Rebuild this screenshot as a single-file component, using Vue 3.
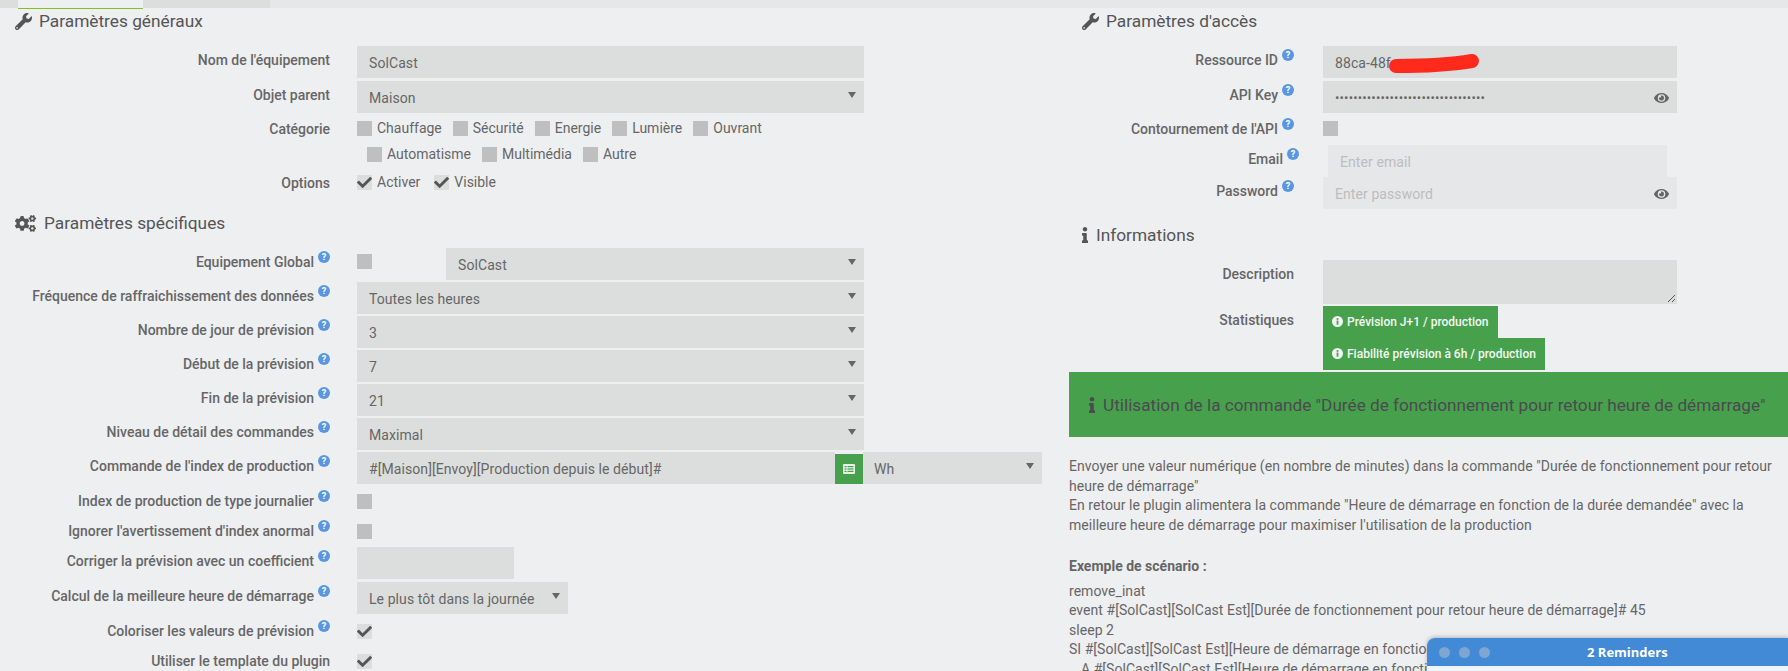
<script setup>
const wrench = 'M507.73 109.1c-2.24-9.03-13.54-12.09-20.12-5.51l-74.36 74.36-67.88-11.31-11.31-67.88 74.36-74.36c6.62-6.62 3.43-17.9-5.66-20.16-47.38-11.74-99.55.91-136.58 37.93-39.64 39.64-50.55 97.1-34.05 147.2L18.74 402.76c-24.99 24.99-24.99 65.51 0 90.5 24.99 24.99 65.51 24.99 90.5 0l213.21-213.21c50.12 16.71 107.47 5.68 147.37-34.22 37.07-37.07 49.7-89.32 37.91-136.73zM64 472c-13.25 0-24-10.75-24-24 0-13.26 10.75-24 24-24s24 10.74 24 24c0 13.25-10.75 24-24 24z'
const cogs = 'M512.1 191l-8.2 14.3c-3 5.3-9.4 7.5-15.1 5.4-11.8-4.4-22.6-10.7-32.1-18.6-4.6-3.8-5.8-10.5-2.8-15.7l8.2-14.3c-6.9-8-12.3-17.3-15.9-27.4h-16.5c-6 0-11.2-4.3-12.2-10.3-2-12-2.1-24.6 0-37.1 1-6 6.2-10.4 12.2-10.4h16.5c3.6-10.1 9-19.4 15.9-27.4l-8.2-14.3c-3-5.2-1.9-11.9 2.8-15.7 9.5-7.9 20.4-14.2 32.1-18.6 5.7-2.1 12.1.1 15.1 5.4l8.2 14.3c10.5-1.9 21.2-1.9 31.7 0L552 6.3c3-5.3 9.4-7.5 15.1-5.4 11.8 4.4 22.6 10.7 32.1 18.6 4.6 3.8 5.8 10.5 2.8 15.7l-8.2 14.3c6.9 8 12.3 17.3 15.9 27.4h16.5c6 0 11.2 4.3 12.2 10.3 2 12 2.1 24.6 0 37.1-1 6-6.2 10.4-12.2 10.4h-16.5c-3.6 10.1-9 19.4-15.9 27.4l8.2 14.3c3 5.2 1.9 11.9-2.8 15.7-9.5 7.9-20.4 14.2-32.1 18.6-5.7 2.1-12.1-.1-15.1-5.4l-8.2-14.3c-10.4 1.9-21.2 1.9-31.7 0zm-10.5-58.8c38.5 29.6 82.4-14.3 52.8-52.8-38.5-29.7-82.4 14.3-52.8 52.8zM386.3 286.1l33.7 16.8c10.1 5.8 14.5 18.1 10.5 29.1-8.9 24.2-26.4 46.4-42.6 65.8-7.4 8.9-20.2 11.1-30.3 5.3l-29.1-16.8c-16 13.7-34.6 24.6-54.9 31.7v33.6c0 11.6-8.3 21.6-19.7 23.6-24.6 4.2-50.4 4.4-75.9 0-11.5-2-20-11.9-20-23.6V418c-20.3-7.2-38.9-18-54.9-31.7L74 403c-10 5.8-22.9 3.6-30.3-5.3-16.2-19.4-33.3-41.6-42.2-65.7-4-10.9.4-23.2 10.5-29.1l33.3-16.8c-3.9-20.9-3.9-42.4 0-63.4L12 205.8c-10.1-5.8-14.6-18.1-10.5-29 8.9-24.2 26-46.4 42.2-65.8 7.4-8.9 20.2-11.1 30.3-5.3l29.1 16.8c16-13.7 34.6-24.6 54.9-31.7V57.1c0-11.5 8.2-21.5 19.6-23.5 24.6-4.2 50.5-4.4 76-.1 11.5 2 20 11.9 20 23.6v33.6c20.3 7.2 38.9 18 54.9 31.7l29.1-16.8c10-5.8 22.9-3.6 30.3 5.3 16.2 19.4 33.2 41.6 42.1 65.8 4 10.9.1 23.2-10 29.1l-33.7 16.8c3.9 21 3.9 42.5 0 63.5zm-117.6 21.1c59.2-77-28.7-164.9-105.7-105.7-59.2 77 28.7 164.9 105.7 105.7zm243.4 182.7l-8.2 14.3c-3 5.3-9.4 7.5-15.1 5.4-11.8-4.4-22.6-10.7-32.1-18.6-4.6-3.8-5.8-10.5-2.8-15.7l8.2-14.3c-6.9-8-12.3-17.3-15.9-27.4h-16.5c-6 0-11.2-4.3-12.2-10.3-2-12-2.1-24.6 0-37.1 1-6 6.2-10.4 12.2-10.4h16.5c3.6-10.1 9-19.4 15.9-27.4l-8.2-14.3c-3-5.2-1.9-11.9 2.8-15.7 9.5-7.9 20.4-14.2 32.1-18.6 5.7-2.1 12.1.1 15.1 5.4l8.2 14.3c10.5-1.9 21.2-1.9 31.7 0l8.2-14.3c3-5.3 9.4-7.5 15.1-5.4 11.8 4.4 22.6 10.7 32.1 18.6 4.6 3.8 5.8 10.5 2.8 15.7l-8.2 14.3c6.9 8 12.3 17.3 15.9 27.4h16.5c6 0 11.2 4.3 12.2 10.3 2 12 2.1 24.6 0 37.1-1 6-6.2 10.4-12.2 10.4h-16.5c-3.6 10.1-9 19.4-15.9 27.4l8.2 14.3c3 5.2 1.9 11.9-2.8 15.7-9.5 7.9-20.4 14.2-32.1 18.6-5.7 2.1-12.1-.1-15.1-5.4l-8.2-14.3c-10.4 1.9-21.2 1.9-31.7 0zM501.6 431c38.5 29.6 82.4-14.3 52.8-52.8-38.5-29.6-82.4 14.3-52.8 52.8z'
const eye = 'M572.52 241.4C518.29 135.59 410.93 64 288 64S57.68 135.64 3.48 241.41a32.35 32.35 0 0 0 0 29.19C57.71 376.41 165.07 448 288 448s230.32-71.64 284.52-177.41a32.35 32.35 0 0 0 0-29.19zM288 400a144 144 0 1 1 144-144 143.93 143.93 0 0 1-144 144zm0-240a95.31 95.31 0 0 0-25.31 3.79 47.85 47.85 0 0 1-66.9 66.9A95.78 95.78 0 1 0 288 160z'
const info = 'M20 424.229h20V279.771H20c-11.046 0-20-8.954-20-20V212c0-11.046 8.954-20 20-20h112c11.046 0 20 8.954 20 20v212.229h20c11.046 0 20 8.954 20 20V492c0 11.046-8.954 20-20 20H20c-11.046 0-20-8.954-20-20v-47.771c0-11.046 8.954-20 20-20zM96 0C56.235 0 24 32.235 24 72s32.235 72 72 72 72-32.235 72-72S135.764 0 96 0z'
const check = 'M173.898 439.404l-166.4-166.4c-9.997-9.997-9.997-26.206 0-36.204l36.203-36.204c9.997-9.998 26.206-9.998 36.204 0L192 312.69 432.095 72.596c9.997-9.997 26.206-9.997 36.204 0l36.203 36.204c9.997 9.997 9.997 26.206 0 36.204l-294.4 294.401c-9.998 9.997-26.207 9.997-36.204-.001z'
const cats1 = ['Chauffage', 'Sécurité', 'Energie', 'Lumière', 'Ouvrant']
const cats2 = ['Automatisme', 'Multimédia', 'Autre']
const selects = [
  ['Fréquence de raffraichissement des données', 'Toutes les heures'],
  ['Nombre de jour de prévision', '3'],
  ['Début de la prévision', '7'],
  ['Fin de la prévision', '21'],
  ['Niveau de détail des commandes', 'Maximal'],
]
</script>

<template>
  <div class="page">
    <div class="topbar">
      <div class="tab-edge"></div>
      <div class="tab-active"></div>
      <div class="tab-other"></div>
    </div>
    <div class="columns">
      <section class="left">
        <h3 class="heading">
          <svg class="ic-wrench" viewBox="0 0 512 512"><path :d="wrench" /></svg>
          <span>Paramètres généraux</span>
        </h3>
        <div class="row gap3">
          <div class="label">Nom de l'équipement</div>
          <div class="field w507">SolCast</div>
        </div>
        <div class="row gap6">
          <div class="label">Objet parent</div>
          <div class="field w507 select">Maison<i class="arrow"></i></div>
        </div>
        <div class="row gap10">
          <div class="label tight">Catégorie</div>
          <div class="chips">
            <div class="chip-line">
              <label v-for="c in cats1" :key="c" class="chip"><span class="box"></span>{{ c }}</label>
            </div>
            <div class="chip-line second">
              <label v-for="c in cats2" :key="c" class="chip"><span class="box"></span>{{ c }}</label>
            </div>
          </div>
        </div>
        <div class="row gap17">
          <div class="label tight">Options</div>
          <div class="chip-line wide">
            <label class="chip"><span class="box on"><svg viewBox="0 0 512 512"><path :d="check" /></svg></span>Activer</label>
            <label class="chip"><span class="box on"><svg viewBox="0 0 512 512"><path :d="check" /></svg></span>Visible</label>
          </div>
        </div>

        <h3 class="heading">
          <svg class="ic-cogs" viewBox="0 0 640 512"><path :d="cogs" /></svg>
          <span>Paramètres spécifiques</span>
        </h3>
        <div class="row gap2">
          <div class="label">Equipement Global<span class="help">?</span></div>
          <div class="global">
            <span class="box"></span>
            <div class="field select w418">SolCast<i class="arrow"></i></div>
          </div>
        </div>
        <div v-for="s in selects" :key="s[0]" class="row gap2">
          <div class="label">{{ s[0] }}<span class="help">?</span></div>
          <div class="field w507 select">{{ s[1] }}<i class="arrow"></i></div>
        </div>
        <div class="row gap7">
          <div class="label">Commande de l'index de production<span class="help">?</span></div>
          <div class="index">
            <div class="field w478">#[Maison][Envoy][Production depuis le début]#</div>
            <div class="list-btn">
              <svg viewBox="0 0 12 10" width="12" height="10"><rect width="12" height="10" rx="1" fill="#e8f3e8" /><rect x="1.5" y="2" width="2" height="1.2" fill="#47a14c" /><rect x="4.5" y="2" width="6" height="1.2" fill="#47a14c" /><rect x="1.5" y="4.4" width="2" height="1.2" fill="#47a14c" /><rect x="4.5" y="4.4" width="6" height="1.2" fill="#47a14c" /><rect x="1.5" y="6.8" width="2" height="1.2" fill="#47a14c" /><rect x="4.5" y="6.8" width="6" height="1.2" fill="#47a14c" /></svg>
            </div>
            <div class="field select wh">Wh<i class="arrow"></i></div>
          </div>
        </div>
        <div class="row check gap10">
          <div class="label">Index de production de type journalier<span class="help">?</span></div>
          <span class="box"></span>
        </div>
        <div class="row check gap6">
          <div class="label">Ignorer l'avertissement d'index anormal<span class="help">?</span></div>
          <span class="box"></span>
        </div>
        <div class="row gap3">
          <div class="label">Corriger la prévision avec un coefficient<span class="help">?</span></div>
          <div class="field w157"></div>
        </div>
        <div class="row gap7">
          <div class="label">Calcul de la meilleure heure de démarrage<span class="help">?</span></div>
          <div class="field select w211">Le plus tôt dans la journée<i class="arrow"></i></div>
        </div>
        <div class="row check gap10">
          <div class="label">Coloriser les valeurs de prévision<span class="help">?</span></div>
          <span class="box on"><svg viewBox="0 0 512 512"><path :d="check" /></svg></span>
        </div>
        <div class="row check">
          <div class="label">Utiliser le template du plugin</div>
          <span class="box on"><svg viewBox="0 0 512 512"><path :d="check" /></svg></span>
        </div>
      </section>

      <section class="right">
        <h3 class="heading r">
          <svg class="ic-wrench" viewBox="0 0 512 512"><path :d="wrench" /></svg>
          <span>Paramètres d'accès</span>
        </h3>
        <div class="rrow gap3">
          <div class="label">Ressource ID<span class="help">?</span></div>
          <div class="field rw scribbled">88ca-48f
            <svg class="scribble" viewBox="0 0 100 24" width="100" height="24"><path d="M13 16 C 35 16, 65 15, 89 11" stroke="#ff2a1c" stroke-width="14" stroke-linecap="round" fill="none" /></svg>
          </div>
        </div>
        <div class="rrow gap6">
          <div class="label">API Key<span class="help">?</span></div>
          <div class="field rw pw"><span class="dots">•••••••••••••••••••••••••••••••••</span><svg class="eye" viewBox="0 0 576 512"><path :d="eye" /></svg></div>
        </div>
        <div class="rrow check gap6">
          <div class="label">Contournement de l'API<span class="help">?</span></div>
          <span class="box"></span>
        </div>
        <div class="rrow email">
          <div class="label">Email<span class="help">?</span></div>
          <div class="field muted ew">Enter email</div>
        </div>
        <div class="rrow gap13">
          <div class="label">Password<span class="help">?</span></div>
          <div class="field muted rw pw">Enter password<svg class="eye" viewBox="0 0 576 512"><path :d="eye" /></svg></div>
        </div>
        <h3 class="heading r">
          <svg class="ic-info" viewBox="0 0 192 512"><path :d="info" /></svg>
          <span>Informations</span>
        </h3>
        <div class="rrow gap2">
          <div class="label">Description</div>
          <div class="field rw area"><svg class="grip" viewBox="0 0 9 9" width="9" height="9"><path d="M1 8 8 1M5 8 8 5" stroke="#555" fill="none" /></svg></div>
        </div>
        <div class="rrow gap2">
          <div class="label">Statistiques</div>
          <div class="stats">
            <a class="stat"><svg viewBox="0 0 12 12" width="11" height="11"><circle cx="6" cy="6" r="6" fill="#f2f6f2" /><circle cx="6" cy="3.2" r="1.1" fill="#47a14c" /><rect x="5" y="5" width="2" height="4.4" fill="#47a14c" /></svg>Prévision J+1 / production</a>
            <a class="stat"><svg viewBox="0 0 12 12" width="11" height="11"><circle cx="6" cy="6" r="6" fill="#f2f6f2" /><circle cx="6" cy="3.2" r="1.1" fill="#47a14c" /><rect x="5" y="5" width="2" height="4.4" fill="#47a14c" /></svg>Fiabilité prévision à 6h / production</a>
          </div>
        </div>
        <div class="banner">
          <svg class="ic-info" viewBox="0 0 192 512"><path :d="info" /></svg>
          <span>Utilisation de la commande "Durée de fonctionnement pour retour heure de démarrage"</span>
        </div>
        <div class="doc">
          <p>Envoyer une valeur numérique (en nombre de minutes) dans la commande "Durée de fonctionnement pour retour heure de démarrage"</p>
          <p>En retour le plugin alimentera la commande "Heure de démarrage en fonction de la durée demandée" avec la meilleure heure de démarrage pour maximiser l'utilisation de la production</p>
          <p class="ex">Exemple de scénario :</p>
          <p class="code">remove_inat</p>
          <p class="code">event #[SolCast][SolCast Est][Durée de fonctionnement pour retour heure de démarrage]# 45</p>
          <p class="code">sleep 2</p>
          <p class="code">SI #[SolCast][SolCast Est][Heure de démarrage en fonction</p>
          <p class="code ind">A #[SolCast][SolCast Est][Heure de démarrage en fonction</p>
        </div>
      </section>
    </div>
    <aside class="reminders">
      <header class="rem-head">
        <span class="dot"></span><span class="dot"></span><span class="dot"></span>
        <strong>2 Reminders</strong>
      </header>
    </aside>
  </div>
</template>

<style>
html, body { margin: 0; background: #eeeff1; overflow: hidden; }
</style>

<style scoped>
.page {
  position: relative;
  width: 1788px;
  height: 671px;
  overflow: hidden;
  background: #eeeff1;
  color: #666;
  font: 14px/20px Roboto, "Liberation Sans", sans-serif;
}
.topbar { display: flex; height: 8px; background: #e6e7e9; }
.tab-edge { width: 18px; background: #dcdedd; }
.tab-active { width: 125px; background: #eeeff1; box-shadow: 0 1px 0 #7cc520; position: relative; z-index: 1; }
.tab-other { width: 127px; background: #dcdedd; }
.columns { display: flex; }
.left { width: 1069px; flex: none; }
.right { width: 719px; flex: none; }
.heading {
  display: flex;
  align-items: center;
  height: 26px;
  margin: 0 0 12px;
  padding-left: 15px;
  font-size: 17.3px;
  font-weight: 400;
  color: #555;
}
.heading.r { padding-left: 13px; }
.heading svg { fill: #555; flex: none; }
.ic-wrench { width: 17px; height: 17px; margin-right: 7px; }
.ic-cogs { width: 21px; height: 17px; margin-right: 8px; }
.heading .ic-info { width: 6px; height: 16px; margin-right: 8px; }
.row { display: grid; grid-template-columns: 330px auto; column-gap: 27px; justify-content: start; }
.rrow { display: grid; grid-template-columns: 225px auto; column-gap: 29px; justify-content: start; }
.rrow .label { padding-top: 4px; }
.rrow.check .label, .row.check .label, .row .label.tight { padding-top: 0; }
.rrow.email { padding-left: 5px; }
.label {
  display: flex;
  justify-content: flex-end;
  padding-top: 4px;
  font-weight: 500;
  color: #666;
  white-space: nowrap;
  height: fit-content;
}
.help {
  width: 12px;
  height: 12px;
  margin: -1px 0 0 4px;
  border-radius: 50%;
  background: #5a97e2;
  color: #fff;
  font: 700 9px/12px Roboto, sans-serif;
  text-align: center;
  flex: none;
}
.gap2 { margin-bottom: 2px; }
.gap3 { margin-bottom: 3px; }
.gap6 { margin-bottom: 6px; }
.gap7 { margin-bottom: 7px; }
.gap10 { margin-bottom: 10px; }
.gap13 { margin-bottom: 13px; }
.gap17 { margin-bottom: 17px; }
.field {
  position: relative;
  box-sizing: border-box;
  display: flex;
  align-items: center;
  height: 32px;
  padding: 2px 12px 0;
  background: #dcdedd;
  color: #666;
  font-size: 14px;
  letter-spacing: .08px;
  white-space: nowrap;
}
.w507 { width: 507px; }
.w418 { width: 418px; }
.w478 { width: 478px; }
.w157 { width: 157px; }
.w211 { width: 211px; }
.wh { width: 179px; padding-left: 11px; }
.rw { width: 354px; }
.ew { width: 339px; }
.arrow {
  margin-left: auto;
  margin-bottom: 6px;
  margin-right: -4px;
  border-left: 4.5px solid transparent;
  border-right: 4.5px solid transparent;
  border-top: 6px solid #666;
}
.chips { display: flex; flex-direction: column; }
.chip-line { display: flex; gap: 11px; height: 20px; }
.chip-line.wide { gap: 14px; }
.chip-line.second { margin-top: 6px; padding-left: 10px; }
.row .chips .chip-line:last-child { height: 18px; }
.chip { display: flex; align-items: flex-start; gap: 5px; color: #666; line-height: 18px; }
.box {
  display: block;
  width: 15px;
  height: 15px;
  margin-top: 2px;
  background: #bfbfbf;
  flex: none;
}
.row.check .box, .rrow.check .box { margin-top: 3px; }
.rrow.check .box { margin-top: 2px; }
.box.on { background: #dcdedd; }
.box.on svg { display: block; width: 15px; height: 15px; fill: #555; }
.row.check, .rrow.check { height: 20px; }
.global { display: flex; align-items: flex-start; }
.global .box { margin: 6px 74px 0 0; }
.index { display: flex; align-items: flex-end; }
.list-btn {
  display: flex;
  align-items: center;
  justify-content: center;
  width: 28px;
  height: 30px;
  background: #47a14c;
  flex: none;
}
.scribbled { overflow: visible; }
.scribble { position: absolute; left: 60px; top: 4px; }
.pw { justify-content: space-between; }
.dots { font-size: 13px; letter-spacing: .16px; }
.eye { width: 15px; height: 14px; fill: #666; flex: none; margin-right: -4px; }
.muted { background: #e6e7e9; color: #bdbdbd; }
.area { height: 44px; }
.grip { position: absolute; right: 1px; bottom: 1px; }
.stats { display: flex; flex-direction: column; align-items: flex-start; }
.stat {
  display: flex;
  align-items: center;
  gap: 4px;
  height: 32px;
  padding: 0 9px;
  box-sizing: border-box;
  background: #47a14c;
  color: #f4f7f4;
  font-size: 12px;
  font-weight: 500;
  white-space: nowrap;
}
.stat svg { margin-top: -2px; }
.banner {
  display: flex;
  align-items: center;
  height: 65px;
  margin-bottom: 20px;
  padding-left: 20px;
  background: #47a14c;
  color: #4b4a50;
  font-size: 17.2px;
  white-space: nowrap;
}
.banner svg { width: 6px; height: 16px; margin-right: 8px; fill: #4b4a50; flex: none; }
.doc { line-height: 19.6px; letter-spacing: .04px; color: #666; }
.doc p { margin: 0; }
.doc .ex { margin: 21.6px 0 5px; font-weight: 700; letter-spacing: 0; }
.doc .code { white-space: nowrap; }
.doc .ind { padding-left: 12px; }
.reminders {
  position: absolute;
  left: 1427px;
  top: 638px;
  width: 361px;
  height: 40px;
  border-radius: 8px 0 0 0;
  background: #f0f5fb;
  box-shadow: 0 -1px 4px rgba(0, 0, 0, .25);
  overflow: hidden;
}
.rem-head {
  position: relative;
  display: flex;
  align-items: center;
  gap: 9px;
  height: 28px;
  padding-left: 12px;
  background: #4289d6;
}
.dot { width: 11px; height: 11px; border-radius: 50%; background: #7ea6d2; }
.rem-head strong {
  position: absolute;
  left: 160px;
  width: 80px;
  text-align: center;
  color: #fff;
  font: 700 13px/28px "Open Sans", Roboto, sans-serif;
  white-space: nowrap;
}
</style>
